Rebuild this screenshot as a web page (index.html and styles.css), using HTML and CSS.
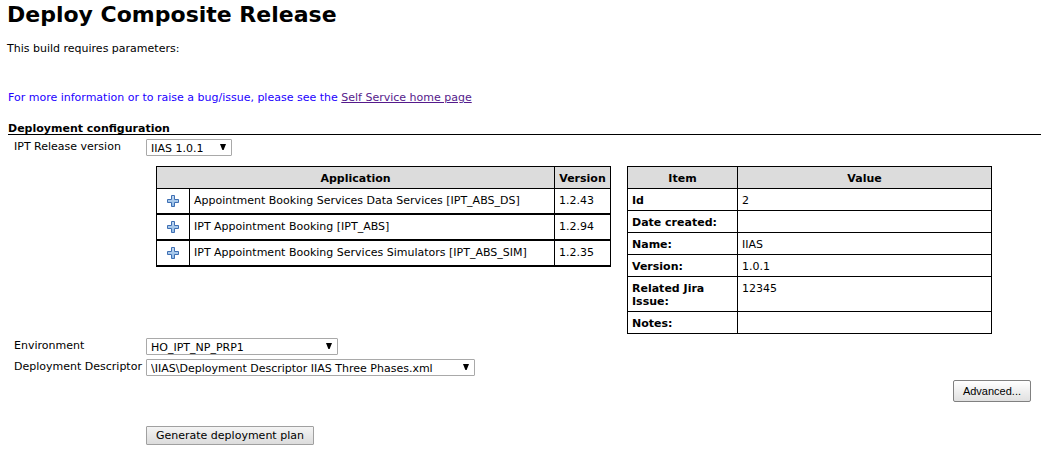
FILE: index.html
```html
<!DOCTYPE html>
<html lang="en">
<head>
<meta charset="utf-8">
<title>Deploy Composite Release</title>
<link rel="stylesheet" href="styles.css">
</head>
<body>
<svg class="sprite" aria-hidden="true">
  <defs>
    <linearGradient id="plus-fill" x1="0" y1="0" x2="0" y2="1">
      <stop offset="0" stop-color="#c3daf2"/>
      <stop offset="1" stop-color="#8db8e4"/>
    </linearGradient>
    <symbol id="plus" viewBox="0 0 12 12">
      <path d="M4.5 .5h3v4h4v3h-4v4h-3v-4h-4v-3h4z" fill="url(#plus-fill)" stroke="#3f6fb3" stroke-linejoin="round"/>
    </symbol>
  </defs>
</svg>
<main class="page">
  <h1 class="title">Deploy Composite Release</h1>
  <p class="intro">This build requires parameters:</p>
  <p class="notice">For more information or to raise a bug/issue, please see the <a class="notice-link" href="#home">Self Service home page</a></p>
  <form class="config">
    <h2 class="section-title">Deployment configuration</h2>
    <div class="field">
      <label class="label" for="release">IPT Release version</label>
      <span class="picker picker-release"><select class="select" id="release"><option>IIAS 1.0.1</option></select></span>
    </div>
    <div class="tables">
      <table class="table apps">
        <thead>
          <tr><th class="head" colspan="2">Application</th><th class="head">Version</th></tr>
        </thead>
        <tbody>
          <tr><td class="cell expand-cell"><button class="expand" type="button" aria-label="Expand"><svg class="plus"><use href="#plus"/></svg></button></td><td class="cell app-name">Appointment Booking Services Data Services [IPT_ABS_DS]</td><td class="cell app-version">1.2.43</td></tr>
          <tr><td class="cell expand-cell"><button class="expand" type="button" aria-label="Expand"><svg class="plus"><use href="#plus"/></svg></button></td><td class="cell app-name">IPT Appointment Booking [IPT_ABS]</td><td class="cell app-version">1.2.94</td></tr>
          <tr><td class="cell expand-cell"><button class="expand" type="button" aria-label="Expand"><svg class="plus"><use href="#plus"/></svg></button></td><td class="cell app-name">IPT Appointment Booking Services Simulators [IPT_ABS_SIM]</td><td class="cell app-version">1.2.35</td></tr>
        </tbody>
      </table>
      <table class="table details">
        <thead>
          <tr><th class="head">Item</th><th class="head">Value</th></tr>
        </thead>
        <tbody>
          <tr><th class="cell item" scope="row">Id</th><td class="cell">2</td></tr>
          <tr><th class="cell item" scope="row">Date created:</th><td class="cell"></td></tr>
          <tr><th class="cell item" scope="row">Name:</th><td class="cell">IIAS</td></tr>
          <tr><th class="cell item" scope="row">Version:</th><td class="cell">1.0.1</td></tr>
          <tr><th class="cell item" scope="row">Related Jira Issue:</th><td class="cell">12345</td></tr>
          <tr><th class="cell item" scope="row">Notes:</th><td class="cell"></td></tr>
        </tbody>
      </table>
    </div>
    <div class="field">
      <label class="label" for="environment">Environment</label>
      <span class="picker picker-environment"><select class="select" id="environment"><option>HO_IPT_NP_PRP1</option></select></span>
    </div>
    <div class="field">
      <label class="label" for="descriptor">Deployment Descriptor</label>
      <span class="picker picker-descriptor"><select class="select" id="descriptor"><option>\IIAS\Deployment Descriptor IIAS Three Phases.xml</option></select></span>
    </div>
    <div class="advanced-row"><button class="advanced" type="button">Advanced...</button></div>
    <div class="submit-row"><button class="submit" type="button">Generate deployment plan</button></div>
  </form>
</main>
</body>
</html>
```
FILE: styles.css
```css
* { box-sizing: border-box; }

body {
  margin: 0;
  background: #fff;
  color: #000;
  font: 11px/13px Verdana, "DejaVu Sans", sans-serif;
}

.sprite { position: absolute; width: 0; height: 0; }
.page { padding: 2px 0 0 7px; }

.title { margin: 0 0 14px; font-size: 22px; line-height: 26px; }
.intro { margin: 0 0 36px; }
.notice { margin: 0 0 20px; padding-left: 1px; color: #20f; }
.notice-link { color: #551a8b; }
.config { padding-left: 1px; }

.section-title {
  margin: 0 0 4px;
  border-bottom: 1px solid #000;
  font-size: 11px;
  line-height: 10px;
}

.field {
  display: flex;
  align-items: flex-start;
  margin-bottom: 4px;
  padding-left: 6px;
}
.label { flex: none; width: 132px; padding-top: 1px; white-space: nowrap; }

.picker { position: relative; display: block; }
.picker::after {
  content: "";
  position: absolute;
  top: 5px;
  right: 6px;
  width: 6px;
  height: 6px;
  background: #000;
  clip-path: polygon(0 0, 100% 0, 60% 100%, 40% 100%);
  pointer-events: none;
}
.picker-release { width: 86px; }
.picker-environment { width: 192px; }
.picker-descriptor { width: 329px; }

.select {
  display: block;
  width: 100%;
  height: 17px;
  padding: 1px 4px 0;
  appearance: none;
  border: 1px solid #a9a9a9;
  border-radius: 1px;
  background: #fff;
  color: #000;
  font: inherit;
}

.tables {
  display: flex;
  align-items: flex-start;
  gap: 16px;
  margin: 10px 49px 4px 148px;
}
.table {
  border-collapse: separate;
  border-spacing: 0;
  border-top: 1px solid #000;
  border-left: 1px solid #000;
}
.head, .cell {
  height: 22px;
  padding: 5px 4px 3px;
  border-right: 1px solid #000;
  border-bottom: 1px solid #000;
  text-align: left;
  vertical-align: top;
}
.head { background: #dcdcdc; text-align: center; }
.apps { flex: none; width: 455px; }
.apps .cell { height: 26px; border-bottom-width: 2px; white-space: nowrap; }
.apps .expand-cell { width: 33px; padding: 6px 4px 4px; }
.app-version { width: 56px; }
.details { flex: 1; }
.item { width: 110px; }

.expand {
  display: block;
  margin: 0 auto;
  padding: 0;
  border: 0;
  background: none;
}
.plus { display: block; width: 12px; height: 12px; }

.advanced-row { display: flex; justify-content: flex-end; padding: 0 10px 0 0; }
.advanced {
  height: 22px;
  padding: 0 9px;
  border: 1px solid #808080;
  border-radius: 2px;
  background: linear-gradient(#fff, #e0e0e0);
  color: #000;
  font: 11px/13px "Liberation Sans", Arial, sans-serif;
}

.submit-row { padding: 24px 0 12px 138px; }
.submit {
  height: 19px;
  padding: 0 9px;
  border: 1px solid #a0a0a0;
  border-radius: 1px;
  background: linear-gradient(#f4f4f4, #dcdcdc);
  color: #000;
  font: inherit;
}
```
